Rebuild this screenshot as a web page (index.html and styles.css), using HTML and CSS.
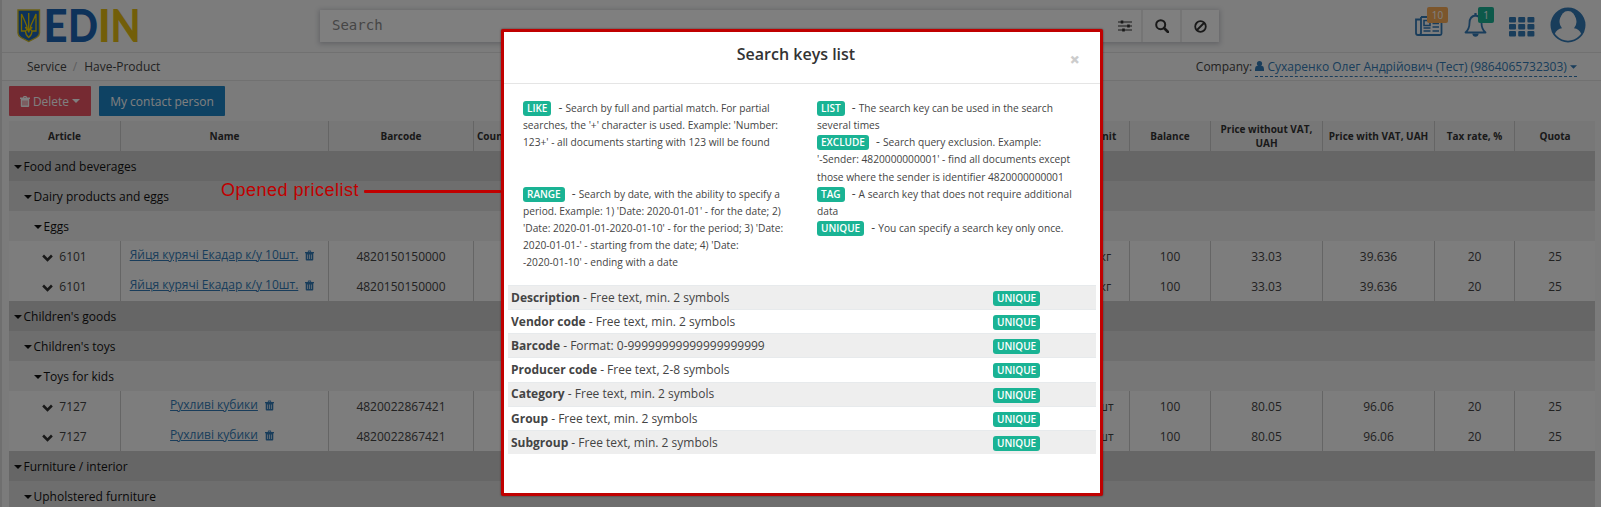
FILE: index.html
```html
<!DOCTYPE html>
<html lang="en">
<head>
<meta charset="utf-8">
<title>Have-Product</title>
<link rel="stylesheet" href="styles.css">
</head>
<body>
<svg width="0" height="0" class="defs">
  <symbol id="trash" viewBox="0 0 10 11"><path fill="currentColor" fill-rule="evenodd" d="M0 1.600h3L3.600 0h2.800L7 1.600h3v1.400H0zM4 1.600h2L5.800 1H4.200zM.8 3h8.400V10q0 1-1 1H1.800q-1 0-1-1zM2.600 4.400v5h.8v-5zm2 0v5h.8v-5zm2 0v5h.8v-5z"/></symbol>
  <symbol id="caret" viewBox="0 0 8 4"><path fill="currentColor" d="M0 0h8L4 4z"/></symbol>
  <symbol id="chev" viewBox="0 0 12 8"><path fill="none" stroke="currentColor" stroke-width="2.800" d="M1.200 1.300 6 6l4.800-4.700"/></symbol>
</svg>
<div class="page">
  <header class="top">
    <svg class="logo" width="126" height="52" viewBox="0 -9 126 52">
      <path d="M1 1h21.500v23q0 2.500-3 4.500L11.700 32.500 4 28.500Q1 26.500 1 24z" fill="#1c65b5" stroke="#d3bd24" stroke-width="1.400"/>
      <path d="M4.500 5v17h4q3-2 .5-7Q7 10 4.500 5zm14.500 0v17h-4q-3-2-.5-7Q17 10 19 5zM11.700 4v19M8.500 22q0 4 3.200 6.500Q15 26 15 22M8 18.500q3 .5 3.700 5 .7-4.500 3.700-5" fill="none" stroke="#f0d000" stroke-width="1.300"/>
      <text class="mark blue" x="26.500" y="33" textLength="24" lengthAdjust="spacingAndGlyphs">E</text>
      <text class="mark blue" x="51" y="33" textLength="30" lengthAdjust="spacingAndGlyphs">D</text>
      <text class="mark gold" x="81" y="33" textLength="12.500" lengthAdjust="spacingAndGlyphs">I</text>
      <text class="mark gold" x="93.500" y="33" textLength="30" lengthAdjust="spacingAndGlyphs">N</text>
    </svg>
    <div class="search">
      <span class="ph">Search</span>
      <span class="sb"><svg width="14" height="12" viewBox="0 0 14 12"><path d="M0 2h14M0 6h14M0 10h14" stroke="#333" stroke-width="1.200"/><path d="M4 .5v3M10.500 4.500v3M5.500 8.500v3" stroke="#333" stroke-width="2.600"/></svg></span>
      <span class="sb"><svg width="14" height="14" viewBox="0 0 14 14"><circle cx="5.700" cy="5.700" r="4.500" fill="none" stroke="#333" stroke-width="2"/><path d="m9 9 4 4" stroke="#333" stroke-width="2.600" stroke-linecap="round"/></svg></span>
      <span class="sb"><svg width="13" height="13" viewBox="0 0 13 13"><circle cx="6.500" cy="6.500" r="5.300" fill="none" stroke="#333" stroke-width="1.800"/><path d="m3 10 7-7" stroke="#333" stroke-width="1.800"/></svg></span>
    </div>
    <nav class="icons">
      <span class="ic news"><svg width="28" height="20" viewBox="0 0 28 20"><path d="M6 1h20.500v16.500q0 1.500-1.500 1.500H3Q1 19 1 17V3.500h4.500M6 1v16q0 2-2 2" fill="none" stroke="currentColor" stroke-width="1.800"/><path d="M9 4.500h6v5H9zM17.500 4h6.500M17.500 7.500h6.500M17.500 11h6.500M8.500 15h7M8.500 12h7M17.500 15h6.500" fill="none" stroke="currentColor" stroke-width="1.600"/></svg><b class="count orange">10</b></span>
      <span class="ic bell"><svg width="23" height="24" viewBox="0 0 23 24"><path d="M11.500 2.500q-6 .8-6 7.500 0 6-4 9.500h20q-4-3.500-4-9.500 0-6.700-6-7.500z" fill="none" stroke="currentColor" stroke-width="1.800" stroke-linejoin="round"/><path d="M11.500 0v3" stroke="currentColor" stroke-width="2.200"/><path d="M8.300 20.500h6.400q-.5 3.300-3.200 3.300t-3.200-3.300z" fill="currentColor"/></svg><b class="count green">1</b></span>
      <svg class="ic" width="26" height="20" viewBox="0 0 26 20" fill="currentColor"><g id="dots"><rect width="7" height="5.400" rx="1"/><rect x="9.200" width="7" height="5.400" rx="1"/><rect x="18.400" width="7" height="5.400" rx="1"/></g><use href="#dots" y="7"/><use href="#dots" y="14"/></svg>
      <svg class="ic" width="36" height="36" viewBox="0 0 36 36"><circle cx="18" cy="18" r="16.600" fill="none" stroke="currentColor" stroke-width="1.800"/><path d="M18 1.500a16.500 16.500 0 0 0-13.500 26Q7 21.500 12 21.300a10 10 0 0 1-2.500-6.300C9.500 9.500 13 6 18 6s8.500 3.500 8.500 9a10 10 0 0 1-2.500 6.300q5 .2 7.500 6.200A16.500 16.500 0 0 0 18 1.500z" fill="currentColor"/><ellipse cx="18" cy="12.500" rx="7.500" ry="8.500" fill="#f8f8f8"/></svg>
    </nav>
  </header>
  <div class="crumbs">
    <div class="path"><span>Service</span><i>/</i><span>Have-Product</span></div>
    <div class="company">Company: <span class="who"><svg width="9" height="10" viewBox="0 0 9 10"><circle cx="4.500" cy="2.600" r="2.600" fill="currentColor"/><path d="M0 10V8q0-3 2-3.300h5Q9 5 9 8v2z" fill="currentColor"/></svg> Сухаренко Олег Андрійович (Тест) (9864065732303) <svg width="7" height="4" class="up"><use href="#caret"/></svg></span></div>
  </div>
  <div class="actions">
    <button class="btn red"><svg width="10" height="11"><use href="#trash"/></svg>Delete<svg width="8" height="4"><use href="#caret"/></svg></button>
    <button class="btn blue-bg">My contact person</button>
  </div>
  <main class="table">
    <div class="row head"><span>Article</span><span>Name</span><span>Barcode</span><span class="country">Country</span><span class="unit">Unit</span><span>Balance</span><span>Price without VAT, UAH</span><span>Price with VAT, UAH</span><span>Tax rate, %</span><span>Quota</span></div>
    <div class="group g1"><svg width="8" height="4"><use href="#caret"/></svg>Food and beverages</div>
    <div class="group g2"><svg width="8" height="4"><use href="#caret"/></svg>Dairy products and eggs</div>
    <div class="group g3"><svg width="8" height="4"><use href="#caret"/></svg>Eggs</div>
    <div class="row"><span><svg class="chev" width="11" height="8"><use href="#chev"/></svg>6101</span><span class="name"><a>Яйця курячі Екадар к/у 10шт.</a><svg width="9" height="11"><use href="#trash"/></svg></span><span>4820150150000</span><span></span><span class="unit">кг</span><span>100</span><span>33.03</span><span>39.636</span><span>20</span><span>25</span></div>
    <div class="row"><span><svg class="chev" width="11" height="8"><use href="#chev"/></svg>6101</span><span class="name"><a>Яйця курячі Екадар к/у 10шт.</a><svg width="9" height="11"><use href="#trash"/></svg></span><span>4820150150000</span><span></span><span class="unit">кг</span><span>100</span><span>33.03</span><span>39.636</span><span>20</span><span>25</span></div>
    <div class="group g1"><svg width="8" height="4"><use href="#caret"/></svg>Children's goods</div>
    <div class="group g2"><svg width="8" height="4"><use href="#caret"/></svg>Children's toys</div>
    <div class="group g3"><svg width="8" height="4"><use href="#caret"/></svg>Toys for kids</div>
    <div class="row"><span><svg class="chev" width="11" height="8"><use href="#chev"/></svg>7127</span><span class="name"><a>Рухливі кубики</a><svg width="9" height="11"><use href="#trash"/></svg></span><span>4820022867421</span><span></span><span class="unit">шт</span><span>100</span><span>80.05</span><span>96.06</span><span>20</span><span>25</span></div>
    <div class="row"><span><svg class="chev" width="11" height="8"><use href="#chev"/></svg>7127</span><span class="name"><a>Рухливі кубики</a><svg width="9" height="11"><use href="#trash"/></svg></span><span>4820022867421</span><span></span><span class="unit">шт</span><span>100</span><span>80.05</span><span>96.06</span><span>20</span><span>25</span></div>
    <div class="group g1"><svg width="8" height="4"><use href="#caret"/></svg>Furniture / interior</div>
    <div class="group g2"><svg width="8" height="4"><use href="#caret"/></svg>Upholstered furniture</div>
  </main>
</div>
<div class="shade"></div>
<div class="callout"><span>Opened pricelist</span><i></i></div>
<section class="modal">
  <div class="m-head"><h4>Search keys list</h4><span class="close">×</span></div>
  <div class="keys">
    <p><b class="label">LIKE</b> <em>-</em> Search by full and partial match. For partial<br>searches, the '+' character is used. Example: 'Number:<br>123+' - all documents starting with 123 will be found</p>
    <p><b class="label">LIST</b> <em>-</em> The search key can be used in the search<br>several times<br><b class="label">EXCLUDE</b> <em>-</em> Search query exclusion. Example:<br>'-Sender: 4820000000001' - find all documents except<br>those where the sender is identifier 4820000000001</p>
    <p><b class="label">RANGE</b> <em>-</em> Search by date, with the ability to specify a<br>period. Example: 1) 'Date: 2020-01-01' - for the date; 2)<br>'Date: 2020-01-01-2020-01-10' - for the period; 3) 'Date:<br>2020-01-01-' - starting from the date; 4) 'Date:<br>-2020-01-10' - ending with a date</p>
    <p><b class="label">TAG</b> <em>-</em> A search key that does not require additional<br>data<br><b class="label">UNIQUE</b> <em>-</em> You can specify a search key only once.</p>
  </div>
  <div class="fields">
    <div class="field"><span><strong>Description</strong> - Free text, min. 2 symbols</span><b class="label">UNIQUE</b></div>
    <div class="field"><span><strong>Vendor code</strong> - Free text, min. 2 symbols</span><b class="label">UNIQUE</b></div>
    <div class="field"><span><strong>Barcode</strong> - Format: 0-99999999999999999999</span><b class="label">UNIQUE</b></div>
    <div class="field"><span><strong>Producer code</strong> - Free text, 2-8 symbols</span><b class="label">UNIQUE</b></div>
    <div class="field"><span><strong>Category</strong> - Free text, min. 2 symbols</span><b class="label">UNIQUE</b></div>
    <div class="field"><span><strong>Group</strong> - Free text, min. 2 symbols</span><b class="label">UNIQUE</b></div>
    <div class="field"><span><strong>Subgroup</strong> - Free text, min. 2 symbols</span><b class="label">UNIQUE</b></div>
  </div>
</section>
</body>
</html>
```
FILE: styles.css
```css
* { box-sizing: border-box; }
html, body { height: 507px; overflow: hidden; }
body { margin: 0; font: 12px/17.14px "Open Sans", sans-serif; color: #444; background: #f7f7f7; }
.defs { position: absolute; }
.page { height: 507px; border-left: 2px solid #dedede; overflow: hidden; }
.top { height: 53px; border-bottom: 1px solid #e3e3e3; display: flex; background: #f8f8f8; }
.logo { margin-left: 15px; flex: none; }
.mark { font: 900 46px Lato, sans-serif; }
.blue { fill: #1c65b5; }
.gold { fill: #e5bd12; }
.search { margin: 10px 0 0 177px; width: 899px; height: 32px; flex: none; display: flex; background: #fff; box-shadow: 0 1px 5px 1px #c4c6cc; }
.ph { flex: 1; padding-left: 12px; font: 14px/30px "DejaVu Sans Mono", monospace; color: #8c8c8c; }
.sb { width: 39px; border-right: 2px solid #eaeaea; display: flex; align-items: center; justify-content: center; }
.sb:nth-child(2) { width: 40px; padding-left: 6px; }
.sb:last-child { border-right: 0; width: 37px; }
.icons { color: #337ab7; display: flex; margin-left: 196px; }
.ic { position: relative; flex: none; }
.icons > :nth-child(1) { margin-top: 16px; width: 28px; }
.icons > :nth-child(2) { margin: 13px 0 0 21px; width: 23px; }
.icons > :nth-child(3) { margin: 17px 0 0 22px; }
.icons > :nth-child(4) { margin: 7px 0 0 15px; }
.count { position: absolute; height: 16px; font: 10px/16px "Open Sans", sans-serif; color: #fff; text-align: center; border-radius: 2px; }
.orange { background: #f8ac59; width: 21px; left: 12px; top: -9px; }
.green { background: #1ab394; width: 16px; left: 14px; top: -6px; }
.crumbs { height: 28px; border-bottom: 1px solid #e3e3e3; display: flex; justify-content: space-between; padding: 5px 24px 0 25px; background: #fafafa; white-space: nowrap; }
.path i { font-style: normal; color: #bbb; margin: 0 7px 0 6px; }
.who { color: #337ab7; border-bottom: 1px dashed #337ab7; padding-bottom: 1px; }
.up { margin-bottom: 2px; }
.actions { display: flex; gap: 8px; padding: 5px 7px; }
.btn { height: 30px; border: 0; border-radius: 1px; color: #fff; font: 12px "Open Sans", sans-serif; padding: 0; display: flex; align-items: center; justify-content: center; gap: 3px; }
.red { background: #ed5565; width: 82px; }
.blue-bg { background: #1c84c6; width: 126px; }
.table { margin-left: 7px; width: 1586px; }
.row { height: 30px; display: grid; grid-template-columns: 112px 208px 145px 604px 52px 81px 112px 112px 80px 80px; background: #fafafa; }
.row > span { border-right: 1px solid #cbcbcb; display: flex; align-items: center; justify-content: center; text-align: center; white-space: nowrap; padding-top: 1px; }
.row > span:last-child { border: 0; }
.row > .unit { padding-left: 4px; }
.head { background: #eee; font-weight: 700; font-size: 10px; line-height: 14px; color: #333; }
.row.head > span { padding-top: 0; }
.head > span:nth-child(7) { white-space: normal; }
.row > .country { justify-content: flex-start; padding-left: 3px; }
.row .chev { margin: 2px 6px 0 0; color: #333; }
.row > .name { padding: 0 5px 3px 0; color: #337ab7; }
.name a { text-decoration: underline; }
.name svg { margin: 2px 0 0 7px; }
.group { height: 30px; display: flex; align-items: center; gap: 1.500px; color: #111; padding-top: 1px; }
.g1 { background: #ccc; padding-left: 5px; }
.g2 { background: #ddd; padding-left: 15px; }
.g3 { background: #eee; padding-left: 25px; }
.shade { position: absolute; inset: 0; background: rgba(0,0,0,.5); }
.callout { position: absolute; left: 221px; top: 179px; width: 280px; height: 22px; display: flex; align-items: center; gap: 5px; color: #c00000; font: 18px/20px "Liberation Sans", sans-serif; letter-spacing: .5px; white-space: nowrap; }
.callout i { height: 3px; flex: 1; background: #c00000; margin-top: 2px; border-radius: 1px; }
.modal { position: absolute; left: 501px; top: 29px; width: 602px; height: 467px; border: 3px solid #c00000; border-radius: 2px; background: #fff; box-shadow: 0 0 2px rgba(60,0,0,.7); color: #444; }
.m-head { height: 52px; border-bottom: 1px solid #e5e5e5; display: flex; justify-content: center; position: relative; }
h4 { margin: 11px 0 0; font: 600 16px/22px "Open Sans", sans-serif; color: #333; transform: translateX(-6px); }
.close { position: absolute; right: 20px; top: 16px; font: 800 18px/22px "Open Sans", sans-serif; color: #ccc; }
.keys { display: grid; grid-template-columns: 294px 270px; padding: 16px 0 0 19px; font-size: 10.200px; white-space: nowrap; }
.keys p { margin: 0; }
.keys em { font-style: normal; font-size: 12px; margin-left: 4.500px; margin-right: .4px; line-height: 1; }
.label { display: inline-block; height: 15px; padding: 0 4px; border-radius: 3px; background: #1ab394; color: #fff; font: 600 10px/15px "Open Sans", sans-serif; }
.fields { margin: 13.600px 4px 0; }
.field { height: 24.140px; display: grid; grid-template-columns: 482px 60px; align-items: center; padding-left: 3px; border-top: 1px solid #e7eaec; }
.field:nth-child(odd) { background: #eee; }
.field .label { justify-self: start; margin-top: 2px; }
```
